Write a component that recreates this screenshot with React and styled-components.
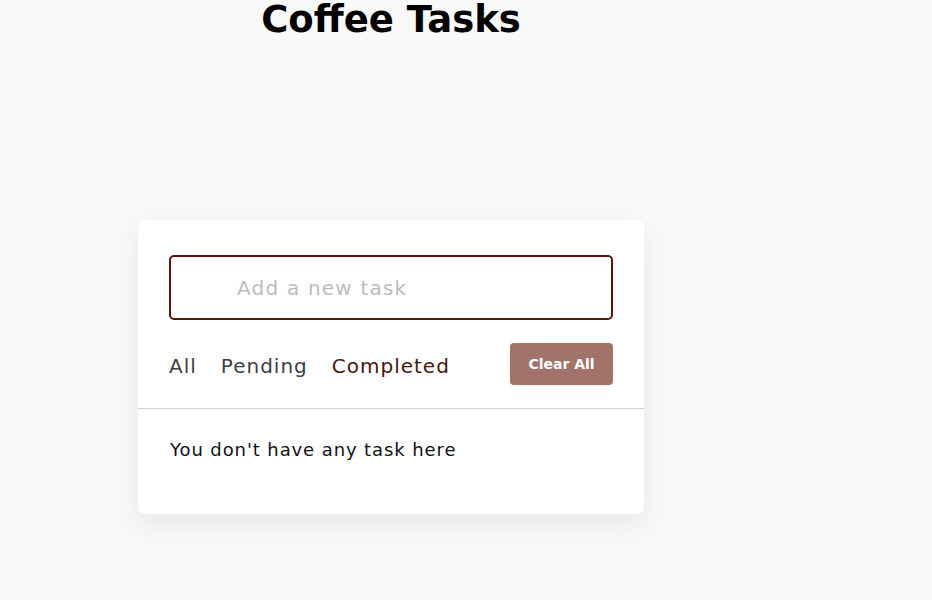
import React, { useState } from 'react';
import styled, { createGlobalStyle } from 'styled-components';

const GlobalStyle = createGlobalStyle`
  * { box-sizing: border-box; }
  body {
    margin: 0;
    background: #f9f9f9;
    font-family: 'DejaVu Sans', sans-serif;
  }
`

const Page = styled.div`
  width: 932px;
  height: 600px;
  overflow: hidden;
  padding-left: 138px;
`

const Column = styled.div`
  width: 506px;
  display: flex;
  flex-direction: column;
`

const Title = styled.h1`
  margin: -6px 0 0;
  height: 226px;
  font-family: 'DejaVu Sans', sans-serif;
  font-weight: 700;
  font-size: 37px;
  line-height: 52px;
  text-align: center;
  color: #000;
`

const Card = styled.div`
  background: #fff;
  border-radius: 7px;
  box-shadow: 0 10px 30px rgba(0, 0, 0, 0.08);
`

const Top = styled.div`
  padding: 35px 31px 23px;
  border-bottom: 1px solid #cfcfcf;
  display: flex;
  flex-direction: column;
  gap: 23px;
`

const TaskInput = styled.input`
  width: 100%;
  height: 65px;
  border: 2px solid #5a1708;
  border-radius: 5px;
  padding: 0 0 0 66px;
  font-family: 'DejaVu Sans', sans-serif;
  font-size: 20px;
  letter-spacing: 1.2px;
  color: #333;
  outline: none;

  &::placeholder {
    color: #bdbdbd;
  }
`

const Controls = styled.div`
  display: flex;
  align-items: center;
  justify-content: space-between;
`

const Filters = styled.div`
  display: flex;
  gap: 24px;
  padding-top: 3px;
`

const Filter = styled.span`
  font-size: 20px;
  letter-spacing: 1px;
  color: ${p => (p.$active ? '#4a1408' : '#3a3f47')};
  cursor: pointer;
`

const ClearButton = styled.button`
  width: 103px;
  height: 42px;
  border: none;
  border-radius: 4px;
  background: #a1736a;
  color: #fff;
  font-family: 'DejaVu Sans', sans-serif;
  font-size: 14px;
  font-weight: 600;
  cursor: pointer;
`

const Empty = styled.p`
  margin: 0;
  padding: 28px 32px 51px;
  font-size: 18px;
  letter-spacing: 0.9px;
  line-height: 26px;
  color: #111;
`

export default function App() {
  const [filter, setFilter] = useState('completed')
  const filters = [
    ['all', 'All'],
    ['pending', 'Pending'],
    ['completed', 'Completed'],
  ]

  return (
    <Page>
      <GlobalStyle />
      <Column>
        <Title>Coffee Tasks</Title>
        <Card>
          <Top>
            <TaskInput placeholder="Add a new task" />
            <Controls>
              <Filters>
                {filters.map(([key, label]) => (
                  <Filter key={key} $active={filter === key} onClick={() => setFilter(key)}>
                    {label}
                  </Filter>
                ))}
              </Filters>
              <ClearButton>Clear All</ClearButton>
            </Controls>
          </Top>
          <Empty>You don't have any task here</Empty>
        </Card>
      </Column>
    </Page>
  )
}
